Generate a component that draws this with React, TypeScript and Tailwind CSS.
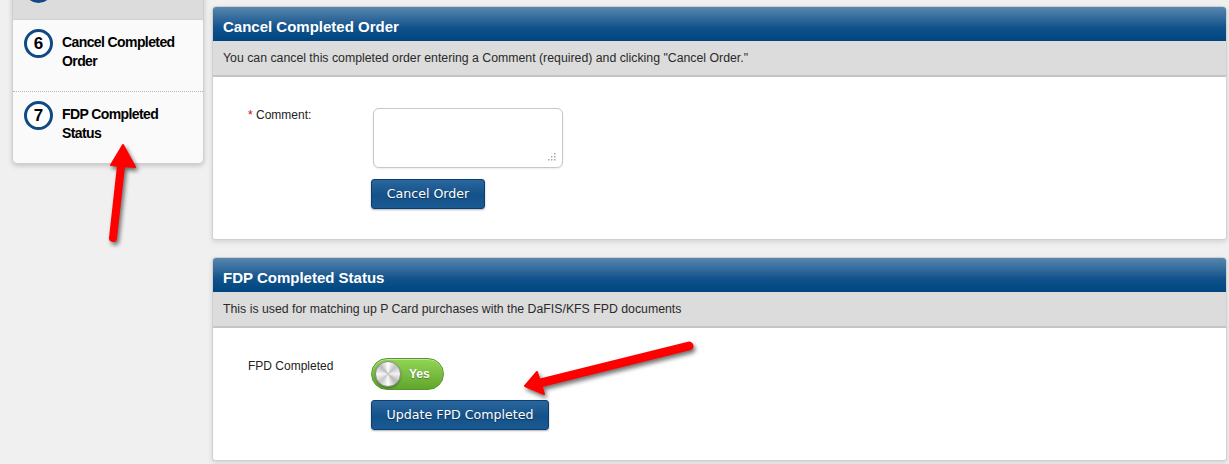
import React from "react";

const font = "font-['Liberation_Sans',Arial,sans-serif]";

function StepCircle({ n }: { n: number }) {
  return (
    <div className="flex h-[29px] w-[29px] shrink-0 items-center justify-center rounded-full border-[3px] border-[#0f4a82] bg-white text-[17px] font-bold leading-none text-black">
      {n}
    </div>
  );
}

function Sidebar() {
  return (
    <div className="-mt-[36px] w-[192px] shrink-0 self-start overflow-hidden rounded-b-[5px] border border-[#cfcfcf] bg-[#fafafa] shadow-[0_2px_5px_rgba(0,0,0,0.18)]">
      <div className="flex h-[55px] gap-[9px] border-b border-[#d2d2d2] bg-[#dcdcdc] pl-[11px] pt-[9px]">
        <StepCircle n={5} />
      </div>
      <div className="flex h-[72px] items-start gap-[9px] border-b border-dotted border-[#b8b8b8] pl-[11px] pt-[9px]">
        <StepCircle n={6} />
        <span className="mt-[4px] text-[14px] font-bold leading-[19px] tracking-[-0.6px] text-black">
          Cancel Completed
          <br />
          Order
        </span>
      </div>
      <div className="flex h-[71px] items-start gap-[9px] pl-[11px] pt-[9px]">
        <StepCircle n={7} />
        <span className="mt-[4px] text-[14px] font-bold leading-[19px] tracking-[-0.6px] text-black">
          FDP Completed
          <br />
          Status
        </span>
      </div>
    </div>
  );
}

function Panel({ title, desc, children }: { title: string; desc: string; children: React.ReactNode }) {
  return (
    <div className="overflow-hidden rounded-t-[4px] rounded-b-[3px] border border-[#d0d0d0] bg-white shadow-[0_2px_5px_rgba(0,0,0,0.12)]">
      <div className="h-[34px] bg-linear-to-b from-[#5687ae] via-[#11538c] via-60% to-[#00457f] pl-[10px] pt-[11px] text-[15px] font-bold leading-[17px] text-white">
        {title}
      </div>
      <div className="flex h-[36px] items-center border-b-2 border-[#c4c4c4] bg-[#dcdcdc] pl-[10px] text-[12.3px] text-[#2a2a2a]">
        {desc}
      </div>
      {children}
    </div>
  );
}

function BlueButton({ label, w }: { label: string; w: string }) {
  return (
    <button
      className={`h-[30px] ${w} rounded-[3px] border border-[#0b3d70] bg-linear-to-b from-[#2a679d] via-[#14518a] via-55% to-[#1a5a92] font-['DejaVu_Sans',Verdana,sans-serif] text-[12.6px] text-white shadow-[0_1px_2px_rgba(0,0,0,0.3)] [text-shadow:0_1px_1px_rgba(0,0,0,0.4)]`}
    >
      {label}
    </button>
  );
}

function Arrows() {
  return (
    <svg
      className="pointer-events-none absolute left-0 top-0 drop-shadow-[2px_3px_2px_rgba(0,0,0,0.55)]"
      width="1229"
      height="464"
    >
      {/* arrow up to sidebar item 7 */}
      <line x1="113" y1="238" x2="121" y2="166" stroke="#ff0000" strokeWidth="8" strokeLinecap="round" />
      <polygon points="123,145 135,167 111,165" fill="#ff0000" stroke="#ff0000" strokeWidth="2" strokeLinejoin="round" />
      {/* arrow to toggle */}
      <line x1="689" y1="346" x2="540" y2="383" stroke="#ff0000" strokeWidth="9" strokeLinecap="round" />
      <polygon points="525,386 537,372 544,394" fill="#ff0000" stroke="#ff0000" strokeWidth="2" strokeLinejoin="round" />
    </svg>
  );
}

export default function App() {
  return (
    <div className={`relative h-[464px] w-full overflow-hidden bg-[#f0f0f0] ${font}`}>
      <div className="flex gap-[8px] pl-[12px] pr-[2px]">
        <Sidebar />
        <div className="flex flex-1 flex-col gap-[17px] pt-[6px]">
          <Panel
            title="Cancel Completed Order"
            desc={'You can cancel this completed order entering a Comment (required) and clicking "Cancel Order."'}
          >
            <div className="flex pb-[30px] pl-[35px] pt-[31px]">
              <div className="w-[123px] text-[12px] leading-[14px] text-[#222]">
                <span className="text-[#d40000]">*</span> Comment:
              </div>
              <div className="flex flex-col items-start gap-[11px]">
                <div className="relative ml-[2px] h-[60px] w-[190px] rounded-[6px] border border-[#c8c8c8] bg-white shadow-[0_1px_2px_rgba(0,0,0,0.08)]">
                  <svg className="absolute bottom-[6px] right-[6px]" width="8" height="8" viewBox="0 0 8 8">
                    <rect x="6" y="0" width="1.5" height="1.5" fill="#aaa" />
                    <rect x="3" y="3" width="1.5" height="1.5" fill="#aaa" />
                    <rect x="6" y="3" width="1.5" height="1.5" fill="#aaa" />
                    <rect x="0" y="6" width="1.5" height="1.5" fill="#aaa" />
                    <rect x="3" y="6" width="1.5" height="1.5" fill="#aaa" />
                    <rect x="6" y="6" width="1.5" height="1.5" fill="#aaa" />
                  </svg>
                </div>
                <BlueButton label="Cancel Order" w="w-[114px]" />
              </div>
            </div>
          </Panel>
          <Panel
            title="FDP Completed Status"
            desc="This is used for matching up P Card purchases with the DaFIS/KFS FPD documents"
          >
            <div className="flex pb-[30px] pl-[35px] pt-[30px]">
              <div className="w-[123px] pt-[1px] text-[12px] leading-[14px] text-[#222]">FPD Completed</div>
              <div className="flex flex-col items-start gap-[10px]">
                <div className="flex h-[32px] w-[73px] items-center rounded-full border border-[#55992a] bg-linear-to-b from-[#93d455] to-[#5fa72c] pl-[3px] shadow-[inset_0_1px_0_rgba(255,255,255,0.4)]">
                  <div className="h-[26px] w-[26px] rounded-full border border-[#8a8a8a] bg-[conic-gradient(#ffffff,#c4c4c4,#f4f4f4,#b8b8b8,#ffffff,#c8c8c8,#f8f8f8,#bcbcbc,#ffffff)] shadow-[0_1px_2px_rgba(0,0,0,0.35)]" />
                  <span className="ml-[8px] text-[12px] font-bold text-white [text-shadow:0_1px_1px_rgba(0,0,0,0.3)]">
                    Yes
                  </span>
                </div>
                <BlueButton label="Update FPD Completed" w="w-[178px]" />
              </div>
            </div>
          </Panel>
        </div>
      </div>
      <Arrows />
    </div>
  );
}
